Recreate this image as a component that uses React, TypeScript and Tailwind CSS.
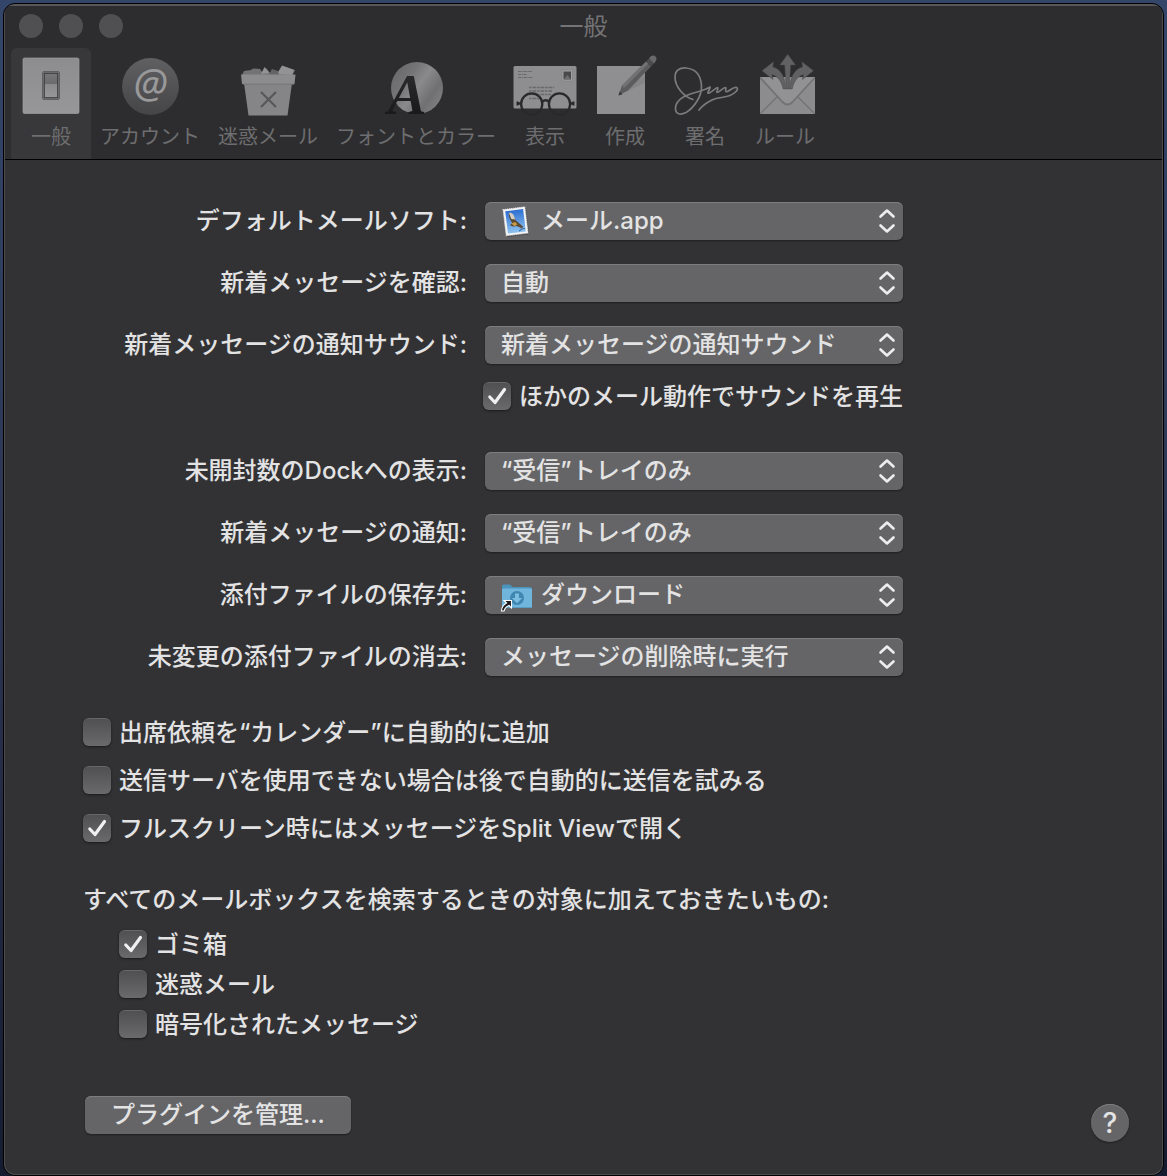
import { ReactNode, useState } from 'react';

type TabItem = { id: string; label: string; icon: ReactNode };

const TABS: TabItem[] = [
  { id: 'general', label: '一般', icon: <SwitchIcon /> },
  { id: 'accounts', label: 'アカウント', icon: <AtIcon /> },
  { id: 'junk', label: '迷惑メール', icon: <JunkIcon /> },
  { id: 'fonts', label: 'フォントとカラー', icon: <FontsIcon /> },
  { id: 'viewing', label: '表示', icon: <ViewingIcon /> },
  { id: 'composing', label: '作成', icon: <ComposingIcon /> },
  { id: 'signatures', label: '署名', icon: <SignatureIcon /> },
  { id: 'rules', label: 'ルール', icon: <RulesIcon /> },
];

export default function App() {
  const [tab, setTab] = useState('general');

  return (
    <div className="flex min-h-screen flex-col bg-gradient-to-b from-[#33466a] via-[#2c3552] to-[#161c30] px-[3px] pt-[3px] font-['Inter','Noto_Sans_CJK_JP',sans-serif] text-2xl text-[#e3e3e4]">
      <div className="flex flex-1 flex-col overflow-hidden rounded-xl border border-black bg-[#323234]">
        <div className="flex flex-1 flex-col rounded-[11px] border border-t-2 border-[#4c4c4e] border-t-[#58585a]">
          {/* Title bar + toolbar */}
          <header className="border-b border-black bg-[#2d2d2f]">
            <div className="grid h-[42px] grid-cols-[1fr_auto_1fr] items-center px-3.5">
              <div className="flex gap-4 pb-0.5">
                <button type="button" aria-label="閉じる" className="size-6 rounded-full bg-[#505052]" />
                <button type="button" aria-label="しまう" className="size-6 rounded-full bg-[#505052]" />
                <button type="button" aria-label="拡大" className="size-6 rounded-full bg-[#505052]" />
              </div>
              <h1 className="leading-9 text-[#747476]">一般</h1>
            </div>
            <nav className="flex flex-wrap px-1.5">
              {TABS.map((t) => (
                <button
                  key={t.id}
                  type="button"
                  onClick={() => setTab(t.id)}
                  className={`flex h-[111px] min-w-20 flex-col items-center rounded-t-md px-[9px] pt-1.5 text-xl text-[#6e6e70] ${
                    tab === t.id ? 'bg-[#38383a]' : ''
                  }`}
                >
                  {t.icon}
                  <span className="mt-[5px] leading-7">{t.label}</span>
                </button>
              ))}
            </nav>
          </header>

          <main className="flex flex-1 flex-col pt-[42px] pr-[33px] pb-8 pl-[78px] font-medium">
            <div className="flex flex-col gap-6">
              <Row id="default-app" label="デフォルトメールソフト:">
                <Popup id="default-app" options={['メール.app']} icon={<MailAppIcon />} />
              </Row>
              <Row id="check" label="新着メッセージを確認:">
                <Popup id="check" options={['自動', '1分ごと', '5分ごと', '手動']} />
              </Row>
              <Row id="sound" label="新着メッセージの通知サウンド:">
                <Popup id="sound" options={['新着メッセージの通知サウンド', 'なし']} />
              </Row>
            </div>
            <div className="mt-[18px] mb-[42px] pl-[400px]">
              <Check label="ほかのメール動作でサウンドを再生" defaultChecked />
            </div>
            <div className="flex flex-col gap-6">
              <Row id="dock" label="未開封数のDockへの表示:">
                <Popup id="dock" options={['“受信”トレイのみ', 'なし']} />
              </Row>
              <Row id="notify" label="新着メッセージの通知:">
                <Popup id="notify" options={['“受信”トレイのみ', '連絡先']} />
              </Row>
              <Row id="downloads" label="添付ファイルの保存先:">
                <Popup id="downloads" options={['ダウンロード']} icon={<FolderIcon />} />
              </Row>
              <Row id="remove" label="未変更の添付ファイルの消去:">
                <Popup id="remove" options={['メッセージの削除時に実行', 'しない']} />
              </Row>
            </div>

            <div className="mt-[42px] flex flex-col gap-5">
              <Check label="出席依頼を“カレンダー”に自動的に追加" />
              <Check label="送信サーバを使用できない場合は後で自動的に送信を試みる" />
              <Check label="フルスクリーン時にはメッセージをSplit Viewで開く" defaultChecked />
            </div>

            <fieldset className="mt-10">
              <legend className="leading-9">すべてのメールボックスを検索するときの対象に加えておきたいもの:</legend>
              <div className="mt-3 flex flex-col gap-3 pl-9">
                <Check label="ゴミ箱" defaultChecked />
                <Check label="迷惑メール" />
                <Check label="暗号化されたメッセージ" />
              </div>
            </fieldset>

            <div className="mt-auto flex items-start justify-between pl-0.5">
              <button
                type="button"
                className="h-[38px] rounded-md bg-[#656567] px-[26px] leading-9 shadow-[inset_0_1px_0_#7d7d7f,0_1px_2px_rgba(0,0,0,0.4)]"
              >
                プラグインを管理...
              </button>
              <button
                type="button"
                aria-label="ヘルプ"
                className="mt-2 size-[38px] rounded-full bg-[#656567] text-[28px] leading-9 shadow-[inset_0_1px_0_#7d7d7f,0_1px_2px_rgba(0,0,0,0.4)]"
              >
                ?
              </button>
            </div>
          </main>
        </div>
      </div>
    </div>
  );
}

function Row({ id, label, children }: { id: string; label: string; children: ReactNode }) {
  return (
    <div className="grid grid-cols-[384px_minmax(0,418px)] items-center gap-[18px]">
      <label htmlFor={id} className="text-right leading-9 whitespace-nowrap">
        {label}
      </label>
      {children}
    </div>
  );
}

function Popup({ id, options, icon }: { id: string; options: string[]; icon?: ReactNode }) {
  return (
    <div className="relative">
      <select
        id={id}
        className={`block h-[38px] w-full appearance-none rounded-md bg-[#656567] pr-10 leading-9 shadow-[inset_0_1px_0_#7d7d7f,0_1px_2px_rgba(0,0,0,0.4)] ${
          icon ? 'pl-14' : 'pl-4'
        }`}
      >
        {options.map((o) => (
          <option key={o}>{o}</option>
        ))}
      </select>
      {icon && <span className="pointer-events-none absolute top-0.5 left-3.5">{icon}</span>}
      <svg
        viewBox="0 0 18 26"
        className="pointer-events-none absolute top-1.5 right-[7px] h-[26px] w-[18px]"
        fill="none"
        stroke="#ededee"
        strokeWidth="2.6"
        strokeLinecap="round"
        strokeLinejoin="round"
      >
        <path d="M2.5 8.5 9 2.5l6.500 6M2.5 17.5 9 23.5l6.500-6" />
      </svg>
    </div>
  );
}

function Check({ label, defaultChecked }: { label: string; defaultChecked?: boolean }) {
  return (
    <label className="flex h-7 w-fit items-center gap-2 whitespace-nowrap">
      <span className="relative size-7 shrink-0">
        <input
          type="checkbox"
          defaultChecked={defaultChecked}
          className="peer block size-7 appearance-none rounded-md border-t border-[#68686a] bg-gradient-to-b from-[#505052] to-[#6a6a6c] shadow-sm shadow-black/40"
        />
        <svg
          viewBox="0 0 28 28"
          className="pointer-events-none absolute inset-0 hidden size-7 peer-checked:block"
          fill="none"
          stroke="#f0f0f1"
          strokeWidth="3.2"
          strokeLinecap="round"
          strokeLinejoin="round"
        >
          <path d="M6.8 15 12 20.5 21.5 7.5" />
        </svg>
      </span>
      <span className="pt-0.5 leading-9">{label}</span>
    </label>
  );
}

function ToolbarSvg({ children }: { children: ReactNode }) {
  return (
    <svg viewBox="0 0 72 64" className="-mx-3 h-16 w-[72px] shrink-0 overflow-visible" aria-hidden="true">
      {children}
    </svg>
  );
}

function SwitchIcon() {
  return (
    <ToolbarSvg>
      <defs>
        <linearGradient id="plate" x1="0" y1="0" x2="0" y2="1">
          <stop offset="0" stopColor="#8d8d8f" />
          <stop offset="1" stopColor="#979799" />
        </linearGradient>
        <linearGradient id="lever" x1="0" y1="0" x2="0" y2="1">
          <stop offset="0" stopColor="#77777a" />
          <stop offset=".42" stopColor="#6b6b6d" />
          <stop offset=".46" stopColor="#8b8b8d" />
          <stop offset="1" stopColor="#979799" />
        </linearGradient>
      </defs>
      <rect x="8" y="4" width="56" height="55.5" rx="1.5" fill="url(#plate)" stroke="#9d9d9f" strokeWidth=".7" />
      <rect x="27.5" y="17.5" width="17" height="28" rx="1.5" fill="#8b8b8d" stroke="#606062" />
      <rect x="29.2" y="19.2" width="13.6" height="24.6" fill="url(#lever)" stroke="#39393b" strokeWidth="1.2" />
    </ToolbarSvg>
  );
}

function AtIcon() {
  return (
    <ToolbarSvg>
      <defs>
        <linearGradient id="at" x1="0" y1="0" x2="0" y2="1">
          <stop offset="0" stopColor="#606062" />
          <stop offset="1" stopColor="#454547" />
        </linearGradient>
      </defs>
      <circle cx="36.5" cy="32.5" r="28.4" fill="url(#at)" />
      <text x="36.5" y="43.5" textAnchor="middle" fontSize="40" fontFamily="Noto Sans" fontStyle="italic" fill="#99999b">
        @
      </text>
    </ToolbarSvg>
  );
}

function JunkIcon() {
  return (
    <ToolbarSvg>
      <path d="M10 21 12 17l7-1 2-1.500 7 .5 2 3 4-4 4 5 2-3 6 2 5-6 12 4-3 6z" fill="#737375" />
      <path d="m29 20 3.5-7 5 6zM45 20l5-8.500 12 4.500-2 5z" fill="#939395" />
      <path d="m37 21 3-6 6 2 1 4z" fill="#646466" />
      <path d="M12 29h48l-4.5 32.5h-39z" fill="#858587" />
      <path d="M9 20.5h54.5l-1 9.5H10z" fill="#8c8c8e" />
      <path d="M11 30.2h51" stroke="#747476" strokeWidth="1" />
      <path d="m29 38 15 15M44 38 29 53" stroke="#58585a" strokeWidth="2.2" />
    </ToolbarSvg>
  );
}

function FontsIcon() {
  return (
    <ToolbarSvg>
      <defs>
        <linearGradient id="ball" x1="0" y1=".15" x2="1" y2=".85">
          <stop offset="0" stopColor="#68686a" />
          <stop offset=".3" stopColor="#757577" />
          <stop offset=".5" stopColor="#8a8a8c" />
          <stop offset=".75" stopColor="#707072" />
          <stop offset="1" stopColor="#848486" />
        </linearGradient>
        <linearGradient id="letter" x1="0" y1="0" x2="0" y2="1">
          <stop offset="0" stopColor="#303032" />
          <stop offset="1" stopColor="#141416" />
        </linearGradient>
      </defs>
      <circle cx="37" cy="34" r="26" fill="url(#ball)" />
      <text x="27" y="60" textAnchor="middle" fontSize="58" fontWeight="700" fontStyle="italic" fontFamily="Liberation Serif" fill="url(#letter)">
        A
      </text>
    </ToolbarSvg>
  );
}

function ViewingIcon() {
  return (
    <ToolbarSvg>
      <rect x="4.5" y="12" width="63" height="42.5" rx="1.5" fill="#8e8e90" />
      <path d="M9 17.5h14M9 20.5h9M9 23.5h15" stroke="#68686a" strokeWidth="1.2" strokeDasharray="3 .7 1.5 .5" />
      <path d="M20 33.5h25M20 37h23M20 40.5h22M20 44.5h13" stroke="#6a6a6c" strokeWidth="1.4" strokeDasharray="2.5 .8 4 .7" />
      <rect x="53" y="16" width="10.5" height="11" fill="#a0a0a2" stroke="#7b7b7d" strokeWidth=".8" strokeDasharray="1 .6" />
      <path d="M54.5 17.5h7.5v8h-7.5z" fill="#49494b" />
      <path d="m55 25 3.5-4 3 4z" fill="#6e6e70" />
      <g fill="none" stroke="#29292b" strokeWidth="2.3">
        <circle cx="22.7" cy="50" r="10.6" />
        <circle cx="50.5" cy="50" r="10.6" />
        <path d="M33 48q3.6-3.6 7.2 0M8.5 49.5h4M60.5 49.5h4.5" />
      </g>
      <path d="M8.5 47.5v4M64.5 47.5v4" stroke="#29292b" strokeWidth="2" />
    </ToolbarSvg>
  );
}

function ComposingIcon() {
  return (
    <ToolbarSvg>
      <rect x="8" y="12" width="48" height="48" fill="#8f8f91" />
      <path d="m30 41 26-12v-8z" fill="#858587" />
      <path d="M29.5 41.5 33 31.5 57 7.5l5 5-23 24z" fill="#5c5c5e" />
      <path d="m33 31.5 24-24 2.2 2.2L35 34z" fill="#727274" />
      <path d="m57 7.5 3-3 5 5-3 3z" fill="#4c4c4e" />
      <path d="m60 4.5 1.5-2q3-2 5 0t0 5L65 9.5z" fill="#69696b" />
      <path d="m29.5 41.5 1.3-4 2.7 2.7z" fill="#38383a" />
    </ToolbarSvg>
  );
}

function SignatureIcon() {
  return (
    <ToolbarSvg>
      <path
        d="M24 45.5C15 43 6 33 6 23c0-7 5-9.5 11-9 10 1 15 8 15.5 18C33 42 25 54 17 58.5c-6 3-10 1.5-10.5-3C6 48 12 43.5 20 40.5c8-3 16-4 21-7.500 1 1-3 5-2 6.200C41 40 46 34 48.500 33.500c1.500.5-1.500 4-.5 5 1.500.5 6-5 8.500-5 1.500.5-1 3.500.5 4.200 2 .8 7-5.200 10.500-4.200 3 1.500-1.500 6-6.500 8-6 2.500-12 1.500-18 4.500-5 2.500-10 6-13 10"
        fill="none"
        stroke="#7b7b7d"
        strokeWidth="1.7"
        strokeLinecap="round"
        strokeLinejoin="round"
      />
    </ToolbarSvg>
  );
}

function RulesIcon() {
  return (
    <ToolbarSvg>
      <rect x="11" y="23" width="55" height="37" rx="1" fill="#8c8c8e" />
      <path d="m12 59 16-16M65 59 49 43" stroke="#707072" strokeWidth="1.2" />
      <path d="M11.5 23.5 34.500 49q4 4 8 0l23-25.500z" fill="#929294" />
      <path d="M11.5 24 33.500 48q5 5 10 0L65.500 24" fill="none" stroke="#727274" strokeWidth="1.8" />
      <g fill="#616163" stroke="#4a4a4c" strokeWidth=".5">
        <path d="m13 16.7 11.5-9-.7 5.300C32 15 36 23 37 35h-2.800C32.500 27 28.500 22 22.800 20.500L24 25.500z" />
        <path d="m64.400 16.700-11.500-9 .7 5.300C45.400 15 41.400 23 40.400 35h2.800c1.700-8 5.700-13 11.400-14.500l-1.200 5z" />
        <path d="M38.700.3 46.500 11h-4.800L40 35h-2.600l-1.700-24h-4.800z" />
      </g>
    </ToolbarSvg>
  );
}

function MailAppIcon() {
  return (
    <svg viewBox="0 0 34 34" className="size-[34px]" aria-hidden="true">
      <defs>
        <linearGradient id="sky" x1="0" y1="0" x2="0" y2="1">
          <stop offset="0" stopColor="#2d6fd3" />
          <stop offset="1" stopColor="#8fc4f0" />
        </linearGradient>
      </defs>
      <g transform="rotate(-7 17 17)">
        <rect x="6.5" y="5" width="22" height="27" fill="#222" opacity=".35" />
        <rect x="5.5" y="4" width="22" height="26.5" fill="#f4f4f4" stroke="#e4e4e4" strokeDasharray="1 1" />
        <rect x="7.5" y="6" width="18" height="22.5" fill="url(#sky)" />
        <path d="M11 8c3 0 5 3 5.500 8l7 7.500-1.500 1.500-5-3-3.500 0-3-1.500 2.500-2c-2-4-3-8-2-10.500z" fill="#5c4a36" />
        <path d="M11 8c3.500 0 5 3 5.200 7.500l-3.700-1z" fill="#d3cfc5" />
        <path d="m12 19 4-1 2 2.500-3 1.500z" fill="#c79a45" />
        <path d="M19 27.5q2-3 6-2" stroke="#466f9e" fill="none" />
      </g>
    </svg>
  );
}

function FolderIcon() {
  return (
    <svg viewBox="0 0 34 34" className="size-[34px]" aria-hidden="true">
      <path d="M3 8.5q0-2 2-2h6l2.500 2.500H31q2 0 2 2V28H3z" fill="#4a94bd" />
      <path d="M3 11.5q0-1 1-1h28q1 0 1 1V28.500q0 1.500-1.500 1.500h-27Q3 30 3 28.500z" fill="#70b5dc" />
      <path d="M4 29.5h28" stroke="#5a9dc4" />
      <circle cx="18" cy="20" r="7" fill="#3f86b1" />
      <path d="M16 15.5h4v4.500h3.200L18 25.200 12.800 20H16z" fill="#7cbde2" />
      <path d="M5 22.5h7.500V30l-2.500-2.500q-4 1.500-5 5.500H2.500q0-5 5-8z" fill="#1c1c1e" stroke="#fff" strokeWidth="1.1" />
    </svg>
  );
}
